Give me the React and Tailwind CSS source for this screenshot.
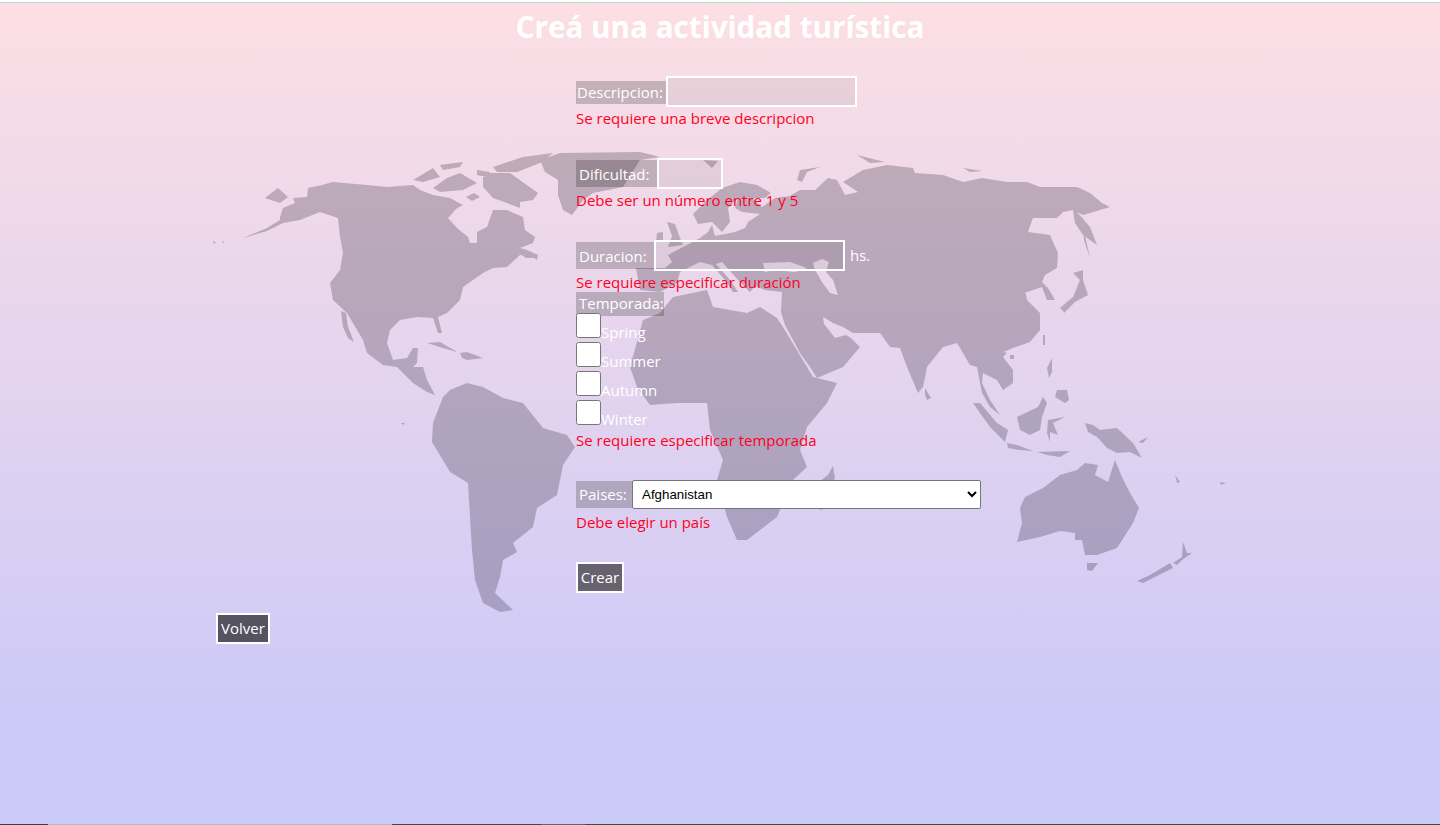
const land = [
  // north america
  "M243 238 L267 228 L280 220 L280 217 L283 208 L295 203 L293 198 L307 197 L308 188 L322 185 L333 182 L367 185 L387 187 L413 185 L420 190 L433 195 L450 198 L463 205 L456 209 L448 218 L457 228 L468 237 L470 243 L477 243 L477 232 L487 227 L493 210 L507 210 L523 217 L525 230 L535 237 L533 243 L520 248 L527 250 L538 255 L537 260 L528 254 L520 255 L507 267 L493 268 L483 273 L473 280 L463 287 L460 300 L447 313 L438 317 L442 333 L438 333 L433 318 L417 317 L400 320 L390 330 L387 343 L393 360 L407 358 L413 348 L418 348 L417 363 L413 367 L423 367 L427 380 L435 395 L427 392 L413 383 L397 367 L383 365 L367 353 L363 340 L347 313 L333 300 L330 283 L340 270 L343 253 L340 237 L338 218 L320 212 L300 220 L283 223 L267 231 Z",
  "M265 198 L278 188 L288 197 L280 203 Z",
  "M341 311 L346 313 L348 327 L354 342 L348 338 L343 327 Z",
  "M413 180 L433 168 L440 177 L423 182 Z",
  "M433 188 L447 178 L460 173 L477 183 L463 190 L440 192 Z",
  "M440 165 L463 162 L460 167 L443 170 Z",
  "M477 170 L490 172 L487 177 L477 175 Z",
  "M466 197 L474 193 L480 197 L472 201 Z",
  "M483 173 L510 173 L538 193 L533 200 L520 202 L520 208 L507 203 L493 198 L483 187 Z",
  "M493 167 L523 157 L553 153 L540 163 L517 172 L497 172 Z",
  "M520 254 L534 253 L538 258 L526 258 Z",
  "M427 343 L440 342 L457 352 L443 348 Z",
  "M460 353 L467 352 L483 358 L467 360 L462 358 Z",
  "M213 241 L216 242 L214 244 Z",
  "M222 241 L225 242 L223 243 Z",
  "M401 423 L405 423 L403 425 Z",
  // greenland
  "M540 160 L560 153 L640 152 L660 157 L640 160 L623 187 L593 193 L583 200 L572 215 L563 210 L558 195 L558 180 L545 172 Z",
  "M703 160 L718 161 L712 168 Z",
  // eurasia
  "M636 268 L665 268 L672 262 L668 255 L683 247 L700 238 L708 232 L712 225 L715 236 L735 232 L745 228 L748 222 L760 214 L742 212 L735 208 L738 198 L728 208 L730 222 L722 232 L712 222 L698 224 L693 214 L705 202 L722 188 L740 182 L757 185 L771 193 L765 198 L752 198 L762 207 L775 198 L790 196 L800 190 L815 190 L828 178 L837 180 L845 195 L858 192 L843 182 L863 170 L887 165 L913 168 L915 173 L943 175 L963 182 L982 178 L1007 182 L1027 182 L1040 187 L1077 187 L1090 193 L1102 203 L1110 207 L1100 210 L1083 215 L1077 212 L1090 227 L1097 245 L1083 235 L1075 223 L1073 210 L1063 212 L1057 218 L1033 218 L1028 232 L1050 235 L1058 253 L1057 268 L1045 275 L1042 282 L1048 288 L1055 300 L1047 300 L1042 287 L1027 292 L1017 287 L1023 280 L1027 300 L1040 313 L1040 330 L1030 342 L1013 348 L1003 352 L1007 353 L1003 357 L1013 370 L1013 383 L1003 390 L997 380 L983 373 L982 383 L990 400 L1000 415 L990 407 L982 393 L977 367 L970 365 L957 343 L943 347 L927 367 L923 387 L918 393 L907 367 L900 348 L890 347 L880 333 L853 333 L843 327 L833 323 L823 317 L824 324 L835 338 L846 335 L851 338 L860 347 L843 367 L817 378 L810 367 L800 353 L785 325 L781 312 L782 292 L765 290 L755 286 L750 292 L738 280 L722 262 L716 264 L730 280 L738 292 L733 292 L725 280 L712 265 L700 262 L680 272 L677 283 L660 292 L640 290 Z",
  // black sea and caspian, wound the other way so they stay open
  "M763 263 L765 272 L775 270 L795 272 L807 268 L790 262 Z",
  "M813 263 L815 270 L822 282 L830 293 L838 295 L833 280 L826 272 L829 262 L822 259 Z",
  "M667 222 L675 224 L680 238 L683 245 L668 247 L672 236 Z",
  "M657 233 L663 232 L663 240 L656 241 Z",
  "M797 180 L800 170 L820 167 L807 172 L802 182 Z",
  "M857 155 L885 162 L870 163 Z",
  "M963 168 L982 171 L970 172 Z",
  "M1082 214 L1086 240 L1090 258 L1084 240 Z",
  "M1060 308 L1073 297 L1080 280 L1073 273 L1083 270 L1083 280 L1088 295 L1075 302 L1065 312 L1065 313 Z",
  "M1043 335 L1045 335 L1045 345 L1043 345 Z",
  "M1010 355 L1014 355 L1014 359 L1010 359 Z",
  "M925 388 L931 398 L927 400 L925 395 Z",
  // africa
  "M630 367 L643 320 L660 313 L673 297 L707 290 L713 307 L747 313 L760 307 L777 318 L783 327 L813 377 L837 383 L827 403 L807 427 L800 450 L807 467 L793 480 L777 517 L747 540 L737 540 L727 517 L717 480 L723 460 L710 430 L707 403 L677 403 L650 405 L637 387 Z",
  "M833 466 L835 478 L822 510 L815 508 L815 485 L828 475 Z",
  // south america
  "M433 423 L443 397 L450 390 L467 383 L483 387 L503 398 L523 403 L543 428 L567 435 L575 447 L563 465 L560 480 L557 495 L537 508 L533 527 L513 543 L517 552 L503 560 L500 577 L495 593 L513 610 L500 612 L483 603 L475 580 L472 550 L468 483 L450 472 L432 442 Z",
  // australia & pacific
  "M1020 508 L1025 497 L1043 488 L1060 475 L1077 470 L1085 463 L1098 465 L1095 475 L1108 482 L1115 460 L1122 477 L1130 493 L1139 508 L1133 523 L1117 548 L1097 555 L1085 555 L1082 540 L1075 540 L1075 533 L1060 531 L1040 537 L1017 542 L1022 523 Z",
  "M1087 563 L1098 563 L1092 571 L1087 570 Z",
  "M1137 581 L1150 575 L1170 563 L1173 568 L1143 583 Z",
  "M1173 563 L1182 557 L1183 542 L1187 553 L1192 553 L1182 560 L1177 565 Z",
  "M1085 423 L1093 425 L1100 430 L1117 428 L1133 443 L1142 458 L1130 452 L1117 453 L1107 448 L1097 437 L1088 432 Z",
  "M1017 417 L1038 407 L1043 397 L1047 403 L1042 417 L1040 430 L1030 435 L1020 430 Z",
  "M973 403 L980 403 L997 423 L1008 430 L1005 442 L990 427 L980 413 Z",
  "M1007 443 L1017 445 L1033 451 L1020 450 L1008 448 Z",
  "M1048 420 L1065 417 L1053 423 L1058 435 L1050 432 L1050 442 L1047 433 Z",
  "M1057 390 L1067 390 L1069 400 L1065 403 L1055 397 Z",
  "M1047 368 L1052 358 L1052 372 L1049 378 Z",
  "M1037 452 L1070 451 L1060 457 L1047 455 Z",
  "M1138 442 L1148 437 L1143 443 Z",
  "M1175 475 L1180 482 L1177 483 Z",
  "M1220 482 L1226 483 L1221 485 Z",
]

const seasons = ["Spring", "Summer", "Autumn", "Winter"]

function Err({ children, className = "" }) {
  return <p className={"h-[22px] leading-[22px] text-[#ff0022] " + className}>{children}</p>
}

function Row({ label, labelClass, inputClass, after, className = "" }) {
  return (
    <div className={"flex items-center h-[31px] " + className}>
      <label className={"flex items-center bg-black/20 " + labelClass}>{label}</label>
      <input type="text" className={"h-[31px] border-2 border-white bg-black/[0.06] outline-none " + inputClass} />
      {after}
    </div>
  )
}

export default function App() {
  return (
    <div className="relative flex h-[825px] flex-col overflow-hidden bg-[linear-gradient(#fddfe4_0%,#cbc9f8_89%)] font-['Open_Sans',sans-serif] text-[15px] text-white">
      <svg className="absolute inset-0 h-[825px] w-[1440px]" viewBox="0 0 1440 825">
        <path d={land.join(" ")} fill="#1a1020" fillOpacity="0.24" />
      </svg>

      <div className="h-[2px] bg-white" />
      <div className="h-px bg-[#b5dcdc]" />

      <div className="relative flex flex-1">
        <main className="flex-1">
          <h1 className="mt-[4px] h-[40px] w-[1440px] text-center text-[29.65px] font-bold leading-[40px]">Creá una actividad turística</h1>

          <form className="ml-[576px] mt-[29px]">
            <Row label="Descripcion:" labelClass="h-[23px] w-[90px] pl-px mt-[2px]" inputClass="w-[191px]" />
            <Err>Se requiere una breve descripcion</Err>

            <Row className="mt-[29px]" label="Dificultad:" labelClass="h-[27px] w-[81px] pl-[3px] pt-px" inputClass="w-[66px]" />
            <Err>Debe ser un número entre 1 y 5</Err>

            <Row
              className="mt-[29px]"
              label="Duracion:"
              labelClass="h-[27px] w-[78px] pl-[3px] pt-px"
              inputClass="w-[191px]"
              after={<span className="ml-[5px]">hs.</span>}
            />
            <Err>Se requiere especificar duración</Err>

            <div className="-mt-px flex h-[24px] w-[88px] items-center bg-black/20 pb-[2px] pl-[3px]">Temporada:</div>
            <div className="-mt-[3px]">
              {seasons.map((s) => (
                <div key={s} className="flex h-[29px] items-start">
                  <input type="checkbox" className="m-0 h-[25px] w-[25px]" />
                  <span className="mt-[8px] leading-[22px]">{s}</span>
                </div>
              ))}
            </div>
            <Err>Se requiere especificar temporada</Err>

            <div className="mt-[28px] flex h-[30px] items-center">
              <label className="flex h-[27px] w-[56px] items-center bg-black/20 pl-[3px]">Paises:</label>
              <select className="h-[29px] w-[349px] rounded-[2px] border border-[#767676] bg-white pl-[5px] font-['Liberation_Sans',sans-serif] text-[13.33px] text-black">
                <option>Afghanistan</option>
              </select>
            </div>
            <Err className="mt-[2px]">Debe elegir un país</Err>

            <button type="button" className="mt-[29px] block h-[31px] w-[48px] border-2 border-white bg-[#67626f] text-center">Crear</button>
          </form>

          <button type="button" className="ml-[216px] mt-[20px] block h-[31px] w-[54px] border-2 border-white bg-[#55535f] text-center">Volver</button>
        </main>

        <div className="flex h-[700px] w-[3px] flex-col bg-white">
          <div className="h-[49px] bg-[#7a6a72]" />
          <div className="mt-[2px] h-[28px] w-px bg-[#7a6a72]" />
        </div>
      </div>

      <div className="relative flex h-px">
        <div className="w-[48px] bg-[#3f3a3f]" />
        <div className="w-[344px] bg-[#b9b7c0]" />
        <div className="w-[149px] bg-[#4a4440]" />
        <div className="w-[44px] bg-[#6b6068]" />
        <div className="flex-1 bg-[#4a4a3a]" />
      </div>
    </div>
  )
}
